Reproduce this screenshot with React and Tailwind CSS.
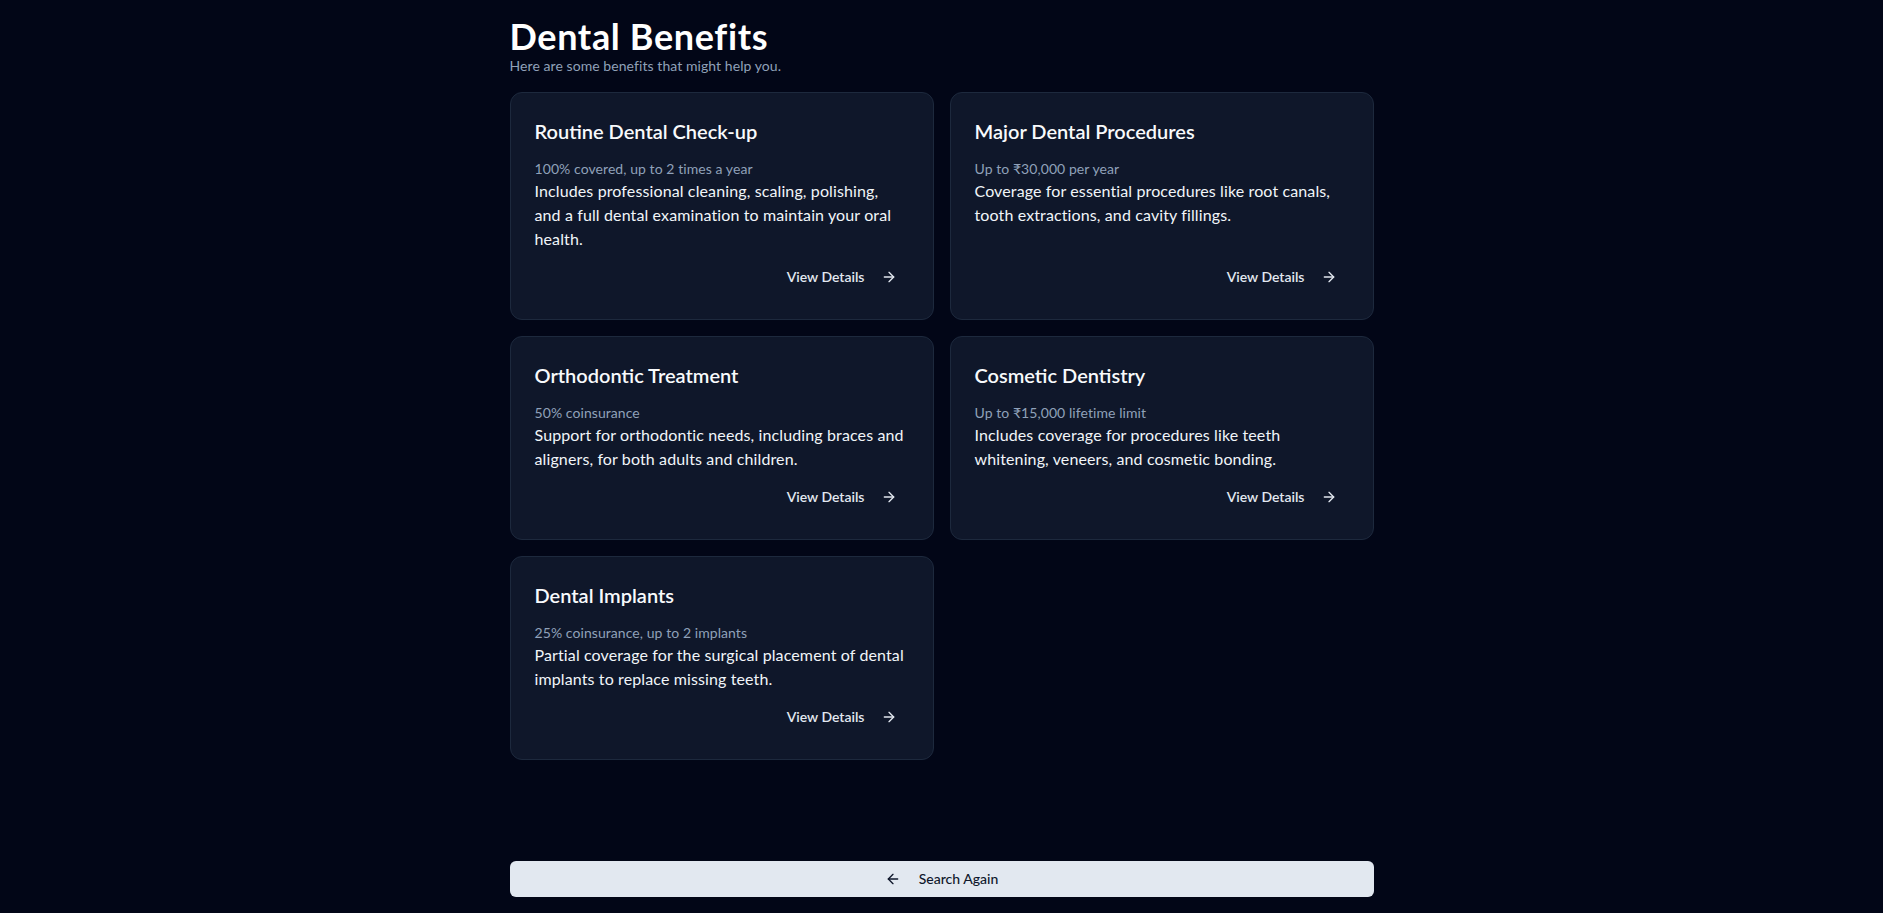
import React from "react";

const ArrowRight = ({ className }) => (
  <svg xmlns="http://www.w3.org/2000/svg" viewBox="0 0 24 24" fill="none" stroke="currentColor" strokeWidth="2" strokeLinecap="round" strokeLinejoin="round" className={className}>
    <path d="M5 12h14" />
    <path d="m12 5 7 7-7 7" />
  </svg>
);

const ArrowLeft = ({ className }) => (
  <svg xmlns="http://www.w3.org/2000/svg" viewBox="0 0 24 24" fill="none" stroke="currentColor" strokeWidth="2" strokeLinecap="round" strokeLinejoin="round" className={className}>
    <path d="m12 19-7-7 7-7" />
    <path d="M19 12H5" />
  </svg>
);

const benefits = [
  {
    title: "Routine Dental Check-up",
    coverage: "100% covered, up to 2 times a year",
    description:
      "Includes professional cleaning, scaling, polishing, and a full dental examination to maintain your oral health.",
  },
  {
    title: "Major Dental Procedures",
    coverage: "Up to ₹30,000 per year",
    description:
      "Coverage for essential procedures like root canals, tooth extractions, and cavity fillings.",
  },
  {
    title: "Orthodontic Treatment",
    coverage: "50% coinsurance",
    description:
      "Support for orthodontic needs, including braces and aligners, for both adults and children.",
  },
  {
    title: "Cosmetic Dentistry",
    coverage: "Up to ₹15,000 lifetime limit",
    description:
      "Includes coverage for procedures like teeth whitening, veneers, and cosmetic bonding.",
  },
  {
    title: "Dental Implants",
    coverage: "25% coinsurance, up to 2 implants",
    description:
      "Partial coverage for the surgical placement of dental implants to replace missing teeth.",
  },
];

export default function App() {
  return (
    <div
      className="min-h-screen bg-[#020617] text-slate-50 flex flex-col"
      style={{ fontFamily: '"Segoe UI", Lato, "Noto Sans", sans-serif' }}
    >
      <div className="w-full max-w-4xl mx-auto px-4 py-4 flex flex-col flex-1">
        <h1 className="text-4xl leading-10 font-bold tracking-[0.018em] text-white">Dental Benefits</h1>
        <p className="text-sm leading-5 tracking-[0.005em] text-slate-400">Here are some benefits that might help you.</p>

        <div className="grid grid-cols-2 gap-4 mt-4">
          {benefits.map((b) => (
            <div
              key={b.title}
              className="flex flex-col rounded-xl border border-slate-800 bg-[#0f172a] p-6"
            >
              <h3 className="text-xl leading-7 font-semibold text-slate-50">{b.title}</h3>
              <p className="mt-[14px] text-sm leading-5 tracking-[0.005em] text-slate-400">{b.coverage}</p>
              <p className="flex-1 pr-1 text-base leading-6 tracking-[0.0075em] text-slate-100">{b.description}</p>
              <div className="mt-2 flex justify-end">
                <button className="h-9 px-3 inline-flex items-center gap-4 rounded-md text-sm font-semibold text-slate-200">
                  View Details
                  <ArrowRight className="h-4 w-4" />
                </button>
              </div>
            </div>
          ))}
        </div>

        <button className="mt-auto h-9 w-full inline-flex items-center justify-center gap-[18px] rounded-md bg-slate-200 text-sm font-medium text-slate-900">
          <ArrowLeft className="h-4 w-4" />
          Search Again
        </button>
      </div>
    </div>
  );
}
